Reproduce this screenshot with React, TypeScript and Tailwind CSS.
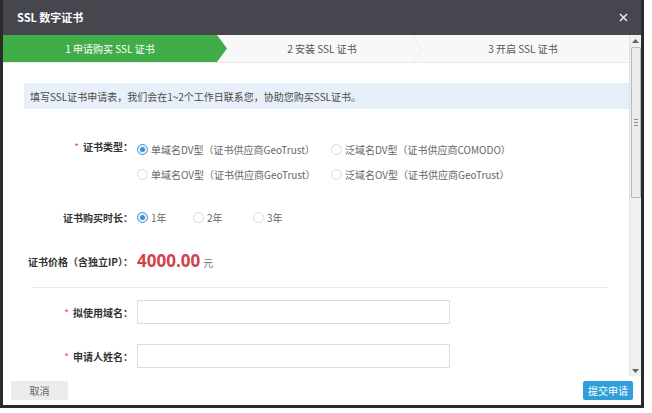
import React, { FunctionComponent } from "react";

const FONT = "[font-family:'Noto_Sans_CJK_SC','Noto_Sans',sans-serif]";

type RadioProps = {
  label: string;
  checked?: boolean;
  width: string;
};

const Radio: FunctionComponent<RadioProps> = ({ label, checked, width }) => (
  <div className={`flex items-center ${width}`}>
    {checked ? (
      <span className="w-[11px] h-[11px] rounded-full border border-[#3d8fd6] bg-[#e6f1fb] flex items-center justify-center">
        <span className="w-[5px] h-[5px] rounded-full bg-[#3d8fd6]" />
      </span>
    ) : (
      <span className="w-[11px] h-[11px] rounded-full border border-[#dcdcdc] bg-white" />
    )}
    <span className="ml-[3px] text-[10px] text-[#666] whitespace-nowrap">{label}</span>
  </div>
);

const Label: FunctionComponent<{ text: string; required?: boolean }> = ({
  text,
  required,
}) => (
  <div className="w-[130px] shrink-0 text-right text-[10px] font-bold text-[#333] whitespace-nowrap">
    {required && <span className="text-[#e5525a] font-normal mr-[4px]">*</span>}
    {text}
  </div>
);

const Scrollbar: FunctionComponent = () => (
  <div className="w-[12px] shrink-0 bg-[#f0f0f0] border-l border-[#e2e2e2] flex flex-col items-center">
    <div className="h-[11px] w-full flex items-center justify-center">
      <svg width="7" height="4" viewBox="0 0 7 4">
        <path d="M0 4 L3.5 0 L7 4 Z" fill="#606060" />
      </svg>
    </div>
    <div className="mt-[1px] h-[151px] w-[10px] bg-[#ececec] border border-[#b9b9b9] rounded-[1px] flex flex-col items-center justify-center gap-[2px]">
      <span className="w-[4px] h-px bg-[#8a8a8a]" />
      <span className="w-[4px] h-px bg-[#8a8a8a]" />
      <span className="w-[4px] h-px bg-[#8a8a8a]" />
    </div>
    <div className="flex-1" />
    <div className="h-[11px] w-full flex items-center justify-center">
      <svg width="7" height="4" viewBox="0 0 7 4">
        <path d="M0 0 L3.5 4 L7 0 Z" fill="#606060" />
      </svg>
    </div>
  </div>
);

const App: FunctionComponent = () => {
  return (
    <div className={`w-[652px] h-[413px] bg-white ${FONT}`}>
      <div className="w-[644px] h-[408px] border-x-[3px] border-b-[3px] border-[#2a2a2a] flex flex-col bg-white">
        {/* Header */}
        <div className="h-[35px] shrink-0 bg-[#45464e] flex items-center justify-between pl-[14px] pr-[13px]">
          <span className="text-white text-[11px] font-bold">SSL 数字证书</span>
          <svg width="9" height="9" viewBox="0 0 9 9">
            <path d="M1 1 L8 8 M8 1 L1 8" stroke="#e6e6e6" strokeWidth="1.6" />
          </svg>
        </div>

        {/* Body */}
        <div className="h-[341px] shrink-0 flex">
          <main className="flex-1 overflow-hidden flex flex-col">
            {/* Steps */}
            <div className="h-[28px] shrink-0 flex bg-[#f8f8f8] border-b border-[#e8e8e8]">
              <div className="w-[224px] pr-[10px] h-full bg-[#41ad49] [clip-path:polygon(0_0,214px_0,224px_50%,214px_100%,0_100%)] flex items-center justify-center">
                <span className="text-white text-[10px]">1 申请购买 SSL 证书</span>
              </div>
              <div className="w-[190px] h-full flex items-center justify-center relative">
                <span className="text-[#555] text-[10px]">2 安装 SSL 证书</span>
                <svg
                  className="absolute right-[-6px] top-0"
                  width="12"
                  height="28"
                  viewBox="0 0 12 28"
                >
                  <path d="M1 0 L11 14 L1 28" stroke="#ececec" fill="none" />
                </svg>
              </div>
              <div className="flex-1 h-full flex items-center justify-center">
                <span className="text-[#555] text-[10px]">3 开启 SSL 证书</span>
              </div>
            </div>

            {/* Info */}
            <div className="mt-[20px] ml-[21px] h-[26px] bg-[#e7f0f9] flex items-center pl-[6px]">
              <span className="text-[10px] text-[#4a4a4a]">
                填写SSL证书申请表，我们会在1~2个工作日联系您，协助您购买SSL证书。
              </span>
            </div>

            {/* Type */}
            <div className="mt-[30px] flex">
              <Label text="证书类型：" required />
              <div className="ml-[4px] flex flex-col gap-[5px]">
                <div className="flex h-[20px]">
                  <Radio width="w-[194px]" label="单域名DV型（证书供应商GeoTrust）" checked />
                  <Radio width="w-[194px]" label="泛域名DV型（证书供应商COMODO）" />
                </div>
                <div className="flex h-[20px]">
                  <Radio width="w-[194px]" label="单域名OV型（证书供应商GeoTrust）" />
                  <Radio width="w-[194px]" label="泛域名OV型（证书供应商GeoTrust）" />
                </div>
              </div>
            </div>

            {/* Duration */}
            <div className="mt-[23px] h-[20px] flex items-center">
              <Label text="证书购买时长：" />
              <div className="ml-[4px] flex">
                <Radio width="w-[56px]" label="1年" checked />
                <Radio width="w-[60px]" label="2年" />
                <Radio width="w-[60px]" label="3年" />
              </div>
            </div>

            {/* Price */}
            <div className="mt-[22px] h-[24px] flex items-center">
              <Label text="证书价格（含独立IP）：" />
              <div className="ml-[4px] flex items-baseline">
                <span className="text-[17px] font-bold text-[#d2424b] [font-family:'Open_Sans','Noto_Sans',sans-serif]">
                  4000.00
                </span>
                <span className="ml-[3px] text-[10px] text-[#777]">元</span>
              </div>
            </div>

            <div className="mt-[14px] ml-[29px] w-[576px] h-px bg-[#ececec]" />

            {/* Domain */}
            <div className="mt-[12px] flex items-center">
              <Label text="拟使用域名：" required />
              <div className="ml-[4px] w-[313px] h-[24px] border border-[#dcdcdc] bg-white" />
            </div>

            {/* Name */}
            <div className="mt-[20px] flex items-center">
              <Label text="申请人姓名：" required />
              <div className="ml-[4px] w-[313px] h-[24px] border border-[#dcdcdc] bg-white" />
            </div>
          </main>
          <Scrollbar />
        </div>

        {/* Footer */}
        <div className="flex-1 flex items-center justify-between pl-[8px] pr-[8px]">
          <button className="w-[57px] h-[19px] bg-[#ececec] text-[10px] text-[#666]">
            取消
          </button>
          <button className="w-[50px] h-[19px] bg-[#2f9fd9] rounded-[2px] text-[10px] text-white">
            提交申请
          </button>
        </div>
      </div>
    </div>
  );
};

export default App;
